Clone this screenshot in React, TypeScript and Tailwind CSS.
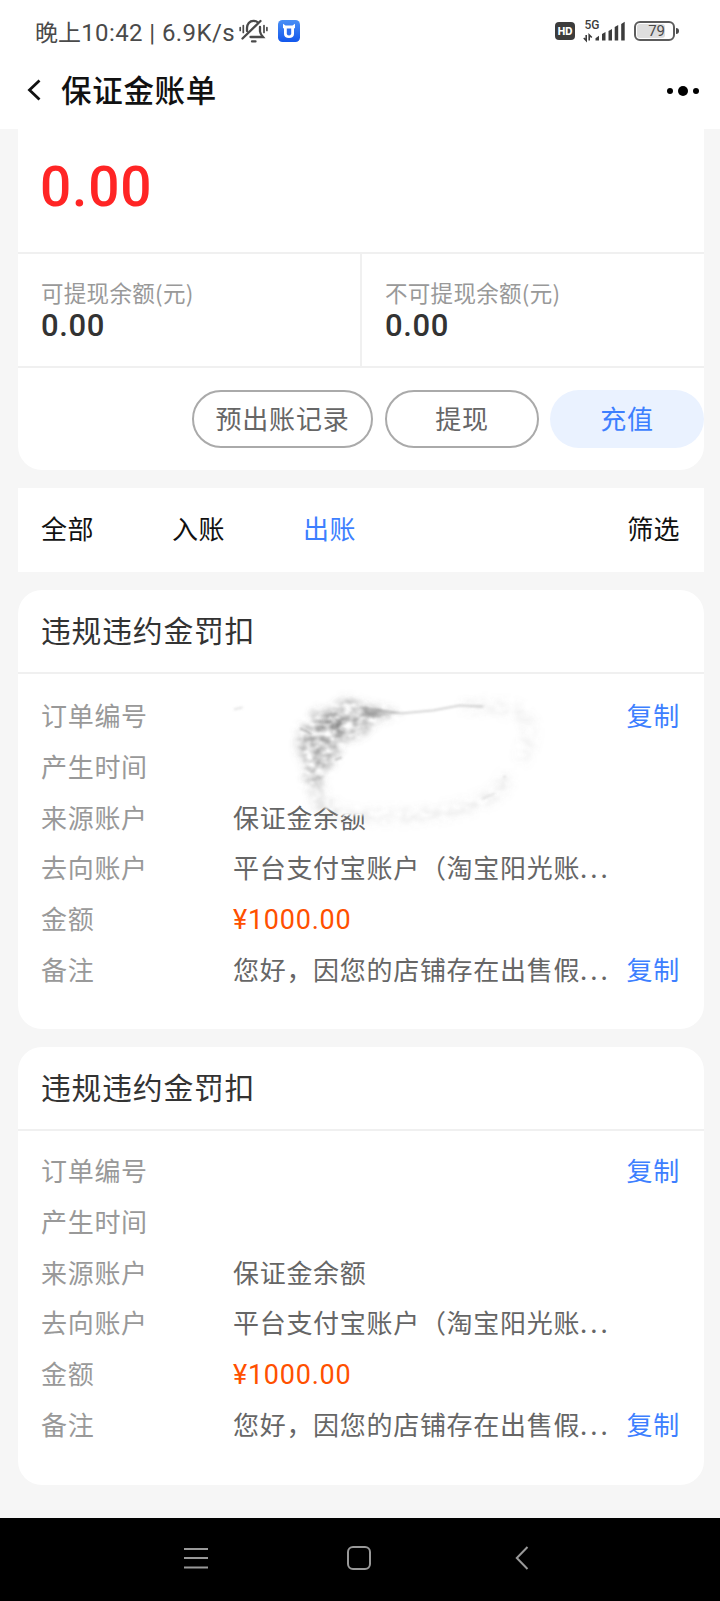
import { ReactNode } from "react";
import clsx from "clsx";

interface BillRow {
    label: string;
    value?: string;
    truncated?: boolean;
    highlight?: boolean;
    copyable?: boolean;
}

interface Bill {
    id: number;
    title: string;
    smudged: boolean;
    rows: BillRow[];
}

const rows: BillRow[] = [
    { label: "订单编号", copyable: true },
    { label: "产生时间" },
    { label: "来源账户", value: "保证金余额" },
    { label: "去向账户", value: "平台支付宝账户（淘宝阳光账", truncated: true },
    { label: "金额", value: "¥1000.00", highlight: true },
    { label: "备注", value: "您好，因您的店铺存在出售假", truncated: true, copyable: true },
];

const bills: Bill[] = [
    { id: 1, title: "违规违约金罚扣", smudged: true, rows },
    { id: 2, title: "违规违约金罚扣", smudged: false, rows },
];

function MutedBellIcon() {
    return (
        <svg width="29" height="26" viewBox="0 0 29 26" fill="none" stroke="#4a4a4a" strokeWidth="2.300" strokeLinecap="round">
            <path d="M8 13V10C8 6 10.500 2.800 14.500 2.800c1.800 0 3.200.6 4.300 1.500M21 9v4.500c.2 2 1.300 3.500 3 5.500H11.500M3.500 20.500 21.500 3" />
            <path d="M13 23.400h3.500" />
            <path d="M1.200 9.500v3M4.300 7.500v7M25 7.500v7M27.900 9.500v3" strokeWidth="1.700" />
        </svg>
    );
}

function AppBadge() {
    return (
        <svg width="22" height="22" viewBox="0 0 22 22">
            <defs>
                <linearGradient id="badge" x1="0" y1="0" x2="0" y2="1">
                    <stop offset="0" stopColor="#4a90f5" />
                    <stop offset="1" stopColor="#1257ec" />
                </linearGradient>
            </defs>
            <rect width="22" height="22" rx="4.500" fill="url(#badge)" />
            <path d="M5 3.800 7.500 5.500h7L17 3.800v4.400h-1V14c0 2.600-2 4-5 4s-5-1.400-5-4V8.200H5Z" fill="#fff" />
            <path d="M8.800 8.500h4.400v4.800a2.200 2.200 0 0 1-4.400 0Z" fill="#2a6df0" />
        </svg>
    );
}

function SignalIcon() {
    return (
        <svg width="43" height="24" viewBox="0 0 43 24" fill="#3c3c3c" className="overflow-visible">
            <text x="1.500" y="9.500" fontSize="12" fontFamily="Roboto, sans-serif" fontWeight="500">
                5G
            </text>
            <path d="M3.200 16v5.500L.8 19M6.200 21.500V16l2.600 2.500" stroke="#3c3c3c" strokeWidth="1.600" fill="none" />
            <path d="M12.500 19.200 16 16.800v4.700h-3.500ZM19 15l3.500-2v8.500H19ZM25.500 12l3.500-2v11.500h-3.500ZM31.700 8l3.500-2v15.500h-3.500ZM38.200 5l3.500-2.200v18.700h-3.500Z" />
        </svg>
    );
}

function StatusBar() {
    return (
        <div className="flex h-[62px] items-center justify-between pl-[35px] pr-[41px] text-[#4a4a4a]">
            <div className="flex items-center">
                <span className="whitespace-nowrap text-[23px] leading-8 tracking-[0.1px]">晚上</span>
                <span className="whitespace-nowrap pt-[3px] font-[Roboto] text-[24px] leading-8 tracking-[0.4px]">10:42 | 6.9K/s</span>
                <span className="ml-1">
                    <MutedBellIcon />
                </span>
                <span className="ml-[10px]">
                    <AppBadge />
                </span>
            </div>
            <div className="flex items-center">
                <span className="flex h-[18px] w-5 items-center justify-center rounded-[4px] bg-[#3c3c3c] font-[Inter] text-[10px] font-extrabold text-white">
                    HD
                </span>
                <span className="ml-2">
                    <SignalIcon />
                </span>
                <span className="ml-2 flex h-5 w-[41px] items-center rounded-[6px] border-2 border-[#5c5c5c] p-px">
                    <span className="flex h-full w-[28px] items-center justify-end rounded-[3px] bg-[#dedede] font-[Roboto] text-[15px] text-[#4a4a4a]">
                        79
                    </span>
                </span>
                <span className="ml-px h-1.5 w-[3px] rounded-r-sm bg-[#4a4a4a]" />
            </div>
        </div>
    );
}

function Header() {
    return (
        <div className="flex h-[67px] items-center pb-[11px] pl-[26px] pr-[21px]">
            <svg width="16" height="24" viewBox="0 0 16 24" fill="none" stroke="#111" strokeWidth="2.800">
                <path d="M13.500 2.500 3.500 12l10 9.500" />
            </svg>
            <h1 className="ml-[19px] pb-0.5 text-[30.5px] leading-[40px] font-medium tracking-[0.7px] text-[#111]">保证金账单</h1>
            <div className="ml-auto flex items-center gap-[5px] pt-px">
                <span className="size-1.5 rounded-full bg-black" />
                <span className="size-[10px] rounded-full bg-black" />
                <span className="size-1.5 rounded-full bg-black" />
            </div>
        </div>
    );
}

function Balance({ label, className }: { label: string; className?: string }) {
    return (
        <div className={clsx("flex flex-col pt-[22px]", className)}>
            <span className="text-[22.5px] leading-[33px] tracking-[0.3px] text-[#999]">{label}</span>
            <span className="mt-px font-[Roboto] text-[31px] leading-[32px] tracking-[0.6px] text-[#333] font-medium">0.00</span>
        </div>
    );
}

function PillButton({ children, className }: { children: ReactNode; className: string }) {
    return (
        <button className={clsx("flex h-[58px] items-center justify-center rounded-full pb-1 text-[26px] tracking-[0.8px]", className)}>
            {children}
        </button>
    );
}

// Charcoal-like eraser trace left over the hidden order number
function Smudge() {
    return (
        <svg className="absolute left-[202px] top-20" width="340" height="180" viewBox="0 0 1020 540">
            <defs>
                <filter id="grain" x="-20%" y="-20%" width="140%" height="140%">
                    <feGaussianBlur in="SourceGraphic" stdDeviation="14" result="soft" />
                    <feTurbulence type="fractalNoise" baseFrequency="0.035 0.05" numOctaves="3" seed="8" result="noise" />
                    <feColorMatrix in="noise" type="matrix" values="0 0 0 0 0  0 0 0 0 0  0 0 0 0 0  2.200 0 0 0 -0.550" result="mask" />
                    <feComposite in="soft" in2="mask" operator="in" />
                    <feGaussianBlur stdDeviation="2.500" />
                </filter>
                <filter id="soften">
                    <feGaussianBlur stdDeviation="3" />
                </filter>
            </defs>
            <path d="M295 385 300 410 345 424 355 436 440 436 520 430V380H300Z" fill="#fff" filter="url(#soften)" />
            <g filter="url(#grain)">
                <path d="M275 120 330 125 375 85 430 105 540 128 470 150 420 200 365 210 345 270 315 300 300 340 260 340 258 280 235 240 240 175 285 160Z" fill="#555" fillOpacity="0.5" />
                <path d="M300 130 370 150 345 185 290 165Z" fill="#333" fillOpacity="0.5" />
                <path d="M280 320 300 400 345 425" stroke="#666" strokeOpacity="0.18" strokeWidth="48" fill="none" />
                <path d="M345 432C470 440 600 445 700 420S850 370 860 315" stroke="#777" strokeOpacity="0.13" strokeWidth="38" fill="none" />
                <path d="M730 110C800 105 890 110 915 140S925 240 900 270" stroke="#777" strokeOpacity="0.1" strokeWidth="40" fill="none" />
            </g>
            <g filter="url(#soften)" fill="none">
                <path d="M415 108 540 128 455 145Z" fill="#777" fillOpacity="0.3" />
                <path d="M430 112 545 130 640 121 720 106 790 110" stroke="#888" strokeOpacity="0.4" strokeWidth="5" />
                <path d="M785 388 825 370M850 322 858 318M42 118 68 112" stroke="#888" strokeOpacity="0.25" strokeWidth="5" />
                <path d="M240 175 275 192M345 270 365 262" stroke="#666" strokeOpacity="0.4" strokeWidth="6" />
            </g>
        </svg>
    );
}

function BillCard({ bill }: { bill: Bill }) {
    return (
        <section className="group relative mt-[18px] h-[439px] rounded-[24px] bg-white last:h-[438px]">
            <h2 className="flex h-[84px] items-center border-b-2 border-[#f0f0f0] pb-[5px] pl-[23px] text-[29.8px] leading-[40px] tracking-[0.8px] text-[#333]">
                {bill.title}
            </h2>
            <div className="pl-[23px] pr-6 pt-4 group-last:pt-[14px]">
                {bill.rows.map((row) => (
                    <div key={row.label} className="flex h-[50.7px] items-center text-[26px] leading-9 tracking-[0.7px]">
                        <span className="w-[192px] text-[#999]">{row.label}</span>
                        {row.value && (
                            <span
                                className={clsx(
                                    "whitespace-nowrap",
                                    row.highlight ? "pt-[3px] font-[Roboto] text-[27px] tracking-[0.75px] text-[#ff5000]" : "text-[#666]"
                                )}
                            >
                                {row.value}
                                {row.truncated && <span className="tracking-[3px]">...</span>}
                            </span>
                        )}
                        {row.copyable && <button className="ml-auto text-[#3d7fff]">复制</button>}
                    </div>
                ))}
            </div>
            {bill.smudged && <Smudge />}
        </section>
    );
}

function NavigationBar() {
    return (
        <nav className="flex h-[83px] items-center bg-black pb-[3px] pl-[184px] text-[#999]">
            <svg width="24" height="24" viewBox="0 0 24 24" stroke="currentColor" strokeWidth="2">
                <path d="M0 3h24M0 12h24M0 21.500h24" />
            </svg>
            <svg className="ml-[139px]" width="24" height="24" viewBox="0 0 24 24" fill="none" stroke="currentColor" strokeWidth="2">
                <rect x="1" y="1" width="22" height="22" rx="5" />
            </svg>
            <svg className="ml-[144px]" width="14" height="24" viewBox="0 0 14 24" fill="none" stroke="currentColor" strokeWidth="2">
                <path d="M12.500 1 1.800 12l10.700 11" />
            </svg>
        </nav>
    );
}

export default function App() {
    return (
        <div className="flex h-[1601px] w-[720px] flex-col overflow-hidden bg-[#f6f6f6] font-['Noto_Sans_CJK_SC',sans-serif]">
            <header className="bg-white">
                <StatusBar />
                <Header />
            </header>
            <main className="flex-1 pl-[18px] pr-4">
                <section className="h-[341px] rounded-b-[24px] bg-white">
                    <div className="flex h-[125px] items-center border-b-2 border-[#f0f0f0] pb-[7px] pl-[22px] font-[Roboto] text-[55px] font-medium tracking-[0.8px] text-[#ff2525]">
                        0.00
                    </div>
                    <div className="flex h-[114px] border-b-2 border-[#f0f0f0]">
                        <Balance label="可提现余额(元)" className="w-[344px] border-r-2 border-[#f0f0f0] pl-[23px]" />
                        <Balance label="不可提现余额(元)" className="pl-[23px]" />
                    </div>
                    <div className="flex justify-end pt-[22px]">
                        <PillButton className="w-[181px] border-2 border-[#aaa] text-[#666]">预出账记录</PillButton>
                        <PillButton className="ml-3 w-[154px] border-2 border-[#aaa] text-[#666]">提现</PillButton>
                        <PillButton className="ml-[11px] w-[154px] bg-[#eaf2ff] text-[#3d7fff]">充值</PillButton>
                    </div>
                </section>
                <div className="mt-[18px] flex h-[84px] items-center bg-white pb-[5px] pl-[23px] pr-6 text-[26px] tracking-[0.4px] text-[#111]">
                    <span className="w-[131px]">全部</span>
                    <span className="w-[131px]">入账</span>
                    <span className="text-[#3d7fff]">出账</span>
                    <span className="ml-auto">筛选</span>
                </div>
                <div>
                    {bills.map((bill) => (
                        <BillCard key={bill.id} bill={bill} />
                    ))}
                </div>
            </main>
            <NavigationBar />
        </div>
    );
}
